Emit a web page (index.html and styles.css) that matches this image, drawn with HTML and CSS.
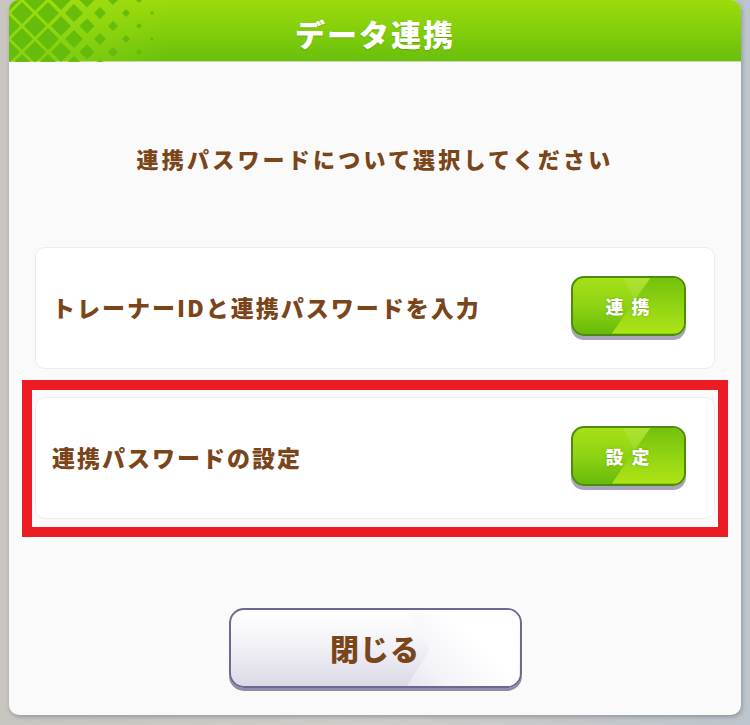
FILE: index.html
```html
<!DOCTYPE html>
<html lang="ja">
<head>
<meta charset="utf-8">
<title>データ連携</title>
<link rel="stylesheet" href="styles.css">
</head>
<body>
<div class="dialog">
  <div class="header">
    <svg class="pattern" width="160" height="62" viewBox="0 0 160 62" aria-hidden="true">
      <defs>
        <linearGradient id="fade" x1="0" y1="0" x2="1" y2="0">
          <stop offset="0" stop-color="#9ede16" stop-opacity="0.6"/>
          <stop offset="0.6" stop-color="#9ede16" stop-opacity="0.3"/>
          <stop offset="1" stop-color="#9ede16" stop-opacity="0"/>
        </linearGradient>
      </defs>
      <rect x="0" y="0" width="160" height="62" fill="url(#fade)"/>
      <g fill="#62b90a" fill-opacity="0.9">
        <polygon points="0,-11 11,0 0,11 -11,0"/>
        <polygon points="0,15 11,26 0,37 -11,26"/>
        <polygon points="0,41 11,52 0,63 -11,52"/>
        <polygon points="13,2 24,13 13,24 2,13"/>
        <polygon points="13,28 24,39 13,50 2,39"/>
        <polygon points="13,54 24,65 13,76 2,65"/>
        <polygon points="26,-11 37,0 26,11 15,0"/>
        <polygon points="26,15 37,26 26,37 15,26"/>
        <polygon points="26,41 37,52 26,63 15,52"/>
        <polygon points="39,2 50,13 39,24 28,13"/>
        <polygon points="39,28 50,39 39,50 28,39"/>
        <polygon points="39,54 50,65 39,76 28,65"/>
        <polygon points="52,-10 62,0 52,10 42,0"/>
        <polygon points="52,16 62,26 52,36 42,26"/>
        <polygon points="52,42 62,52 52,62 42,52"/>
        <polygon points="65,4 74,13 65,22 56,13"/>
        <polygon points="65,30 74,39 65,48 56,39"/>
        <polygon points="65,56 74,65 65,74 56,65"/>
        <polygon points="78,-7.5 85.5,0 78,7.5 70.5,0"/>
        <polygon points="78,18.5 85.5,26 78,33.5 70.5,26"/>
        <polygon points="78,44.5 85.5,52 78,59.5 70.5,52"/>
        <polygon points="91,7 97,13 91,19 85,13"/>
        <polygon points="91,33 97,39 91,45 85,39"/>
        <polygon points="91,59 97,65 91,71 85,65"/>
        <polygon points="104,-5 109,0 104,5 99,0"/>
        <polygon points="104,21 109,26 104,31 99,26"/>
        <polygon points="104,47 109,52 104,57 99,52"/>
        <polygon points="117,9 121,13 117,17 113,13"/>
        <polygon points="117,35 121,39 117,43 113,39"/>
        <polygon points="130,-3 133,0 130,3 127,0"/>
        <polygon points="130,23 133,26 130,29 127,26"/>
        <polygon points="130,49 133,52 130,55 127,52"/>
        <polygon points="143,11 145,13 143,15 141,13"/>
        <polygon points="143,37 145,39 143,41 141,39"/>
      </g>
    </svg>
    <h1 class="title">データ連携</h1>
  </div>
  <div class="body">
    <p class="subtitle">連携パスワードについて選択してください</p>
    <div class="card card-first">
      <span class="card-label">トレーナーIDと連携パスワードを入力</span>
      <button class="btn-green"><span>連 携</span></button>
    </div>
    <div class="highlight">
      <div class="card">
        <span class="card-label">連携パスワードの設定</span>
        <button class="btn-green"><span>設 定</span></button>
      </div>
    </div>
    <div class="close-row">
      <button class="btn-close"><span>閉じる</span></button>
    </div>
  </div>
</div>
</body>
</html>
```
FILE: styles.css
```css
* { box-sizing: border-box; }

html, body {
  margin: 0;
  padding: 0;
  width: 750px;
  height: 725px;
  overflow: hidden;
}

body {
  background: linear-gradient(to right, #c9c5c1 0%, #cfccc9 50%, #bcc5cc 100%);
  font-family: "Noto Sans CJK JP", "Noto Sans", sans-serif;
}

.dialog {
  margin: 0 9px;
  width: 732px;
  height: 715px;
  background: #fafafa;
  border-radius: 10px;
  overflow: hidden;
  box-shadow: 1px 2px 4px rgba(60, 60, 70, 0.35);
  display: flex;
  flex-direction: column;
}

.header {
  position: relative;
  height: 62px;
  flex: none;
  background: linear-gradient(to bottom, #9ddb0b 0%, #86d00b 45%, #69bf0b 100%);
  border-bottom: 1px solid #c9dcb5;
  display: flex;
  align-items: center;
  justify-content: center;
}

.pattern {
  position: absolute;
  left: 0;
  top: 0;
}

.title {
  position: relative;
  margin: 0;
  color: #ffffff;
  font-size: 30px;
  font-weight: 900;
  letter-spacing: 2px;
  line-height: 1;
  padding-top: 4px;
  text-shadow: 0 1px 1px rgba(60, 110, 0, 0.35);
}

.body {
  flex: 1;
  padding: 0 26px;
  display: flex;
  flex-direction: column;
}

.subtitle {
  margin: 79px 0 0;
  height: 34px;
  line-height: 34px;
  text-align: center;
  color: #7a4519;
  font-size: 22px;
  font-weight: 900;
  letter-spacing: 3.2px;
}

.card {
  height: 122px;
  background: #ffffff;
  border: 1px solid #ececec;
  border-radius: 10px;
  display: flex;
  align-items: center;
  justify-content: space-between;
  padding: 0 28px 2px 16px;
}

.card-first {
  margin-top: 72px;
}

.card-label {
  color: #7a4519;
  font-size: 23px;
  font-weight: 900;
  letter-spacing: 2px;
}

.highlight {
  margin: 11px -13px 0;
  border: 10px solid #ec1c24;
  padding: 7px 3px 8px;
}

.btn-green {
  position: relative;
  width: 115px;
  height: 60px;
  border: 2px solid #4c8b0c;
  border-radius: 13px;
  background: linear-gradient(to bottom, #a6e118 0%, #8ed313 50%, #68ba0b 100%);
  box-shadow: 0 4px 0 #a8a4bb;
  overflow: hidden;
  padding: 0;
  cursor: pointer;
  margin-top: -3px;
}

.btn-green::before {
  content: "";
  position: absolute;
  inset: 0;
  background: linear-gradient(to bottom, #74c10d 0%, #94d613 55%, #b0e415 100%);
  clip-path: polygon(70% 0, 100% 0, 100% 100%, 35% 100%);
}

.btn-green::after {
  content: "";
  position: absolute;
  inset: 0;
  background: rgba(255, 255, 255, 0.1);
  clip-path: polygon(45% 0, 70% 0, 55% 40%);
}

.btn-green span {
  position: relative;
  z-index: 1;
  color: #ffffff;
  font-family: "Noto Sans CJK JP", sans-serif;
  font-size: 18px;
  font-weight: 900;
  letter-spacing: 2px;
  white-space: pre;
  text-shadow: 0 0 2px rgba(70, 120, 10, 0.6);
}

.close-row {
  margin-top: 71px;
  display: flex;
  justify-content: center;
}

.btn-close {
  position: relative;
  width: 293px;
  height: 80px;
  border: 2px solid #6c6890;
  border-radius: 15px;
  background: linear-gradient(to bottom, #ffffff 0%, #f3f2f7 45%, #dcd9e7 100%);
  box-shadow: 0 3px 0 #8f8bab;
  overflow: hidden;
  padding: 0;
  cursor: pointer;
}

.btn-close::before {
  content: "";
  position: absolute;
  inset: 0;
  background: linear-gradient(45deg, #d9d6e3 35%, #f4f3f8 60%, #ffffff 80%);
  clip-path: polygon(61% 0, 100% 0, 100% 100%, 61% 100%, 69% 52%);
}

.btn-close span {
  position: relative;
  z-index: 1;
  color: #7a4519;
  font-family: "Noto Sans CJK JP", sans-serif;
  font-size: 29px;
  font-weight: 900;
  letter-spacing: 1px;
}
```
